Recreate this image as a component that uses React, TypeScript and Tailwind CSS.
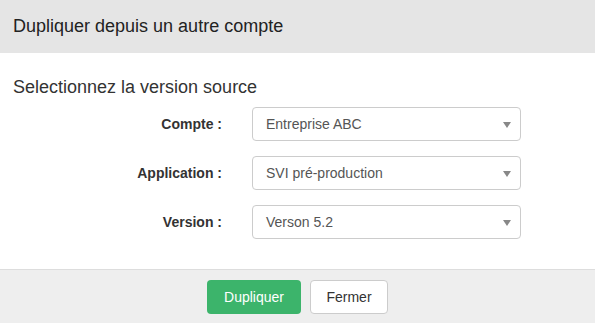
const rows = [
  { label: 'Compte :', value: 'Entreprise ABC' },
  { label: 'Application :', value: 'SVI pré-production' },
  { label: 'Version :', value: 'Verson 5.2' },
]

function FakeSelect({ value }: { value: string }) {
  return (
    <div className="w-[269px] h-[34px] flex items-center justify-between pl-[13px] pr-[9px] border border-[#cccccc] rounded-[4px] bg-white text-[14px] text-[#555555]">
      <span>{value}</span>
      <svg width="8" height="6" viewBox="0 0 8 6" className="mt-[1px]">
        <path d="M0 0 H8 L4 6 Z" fill="#888888" />
      </svg>
    </div>
  )
}

export default function App() {
  return (
    <div className="w-[595px] h-[323px] bg-white flex flex-col font-['Liberation_Sans',Arial,sans-serif] text-[#333333]">
      <div className="h-[53px] shrink-0 flex items-center px-[13px] bg-[#e5e5e5] text-[18px] text-[#222222]">
        Dupliquer depuis un autre compte
      </div>
      <div className="flex-1 pt-[24px] px-[13px]">
        <p className="text-[18px] leading-[21px]">Selectionnez la version source</p>
        <div className="mt-[9px] flex flex-col gap-[15px]">
          {rows.map((r) => (
            <div key={r.label} className="flex items-center">
              <label className="w-[209px] text-right text-[14px] font-bold text-[#333333]">{r.label}</label>
              <div className="ml-[30px]">
                <FakeSelect value={r.value} />
              </div>
            </div>
          ))}
        </div>
      </div>
      <div className="h-[54px] shrink-0 border-t border-[#dddddd] bg-[#eeeeee] flex justify-center pt-[10px] gap-[9px]">
        <button className="w-[94px] h-[34px] rounded-[4px] bg-[#3cb46b] text-white text-[14px]">Dupliquer</button>
        <button className="w-[78px] h-[34px] rounded-[4px] bg-white border border-[#cccccc] text-[#333333] text-[14px]">Fermer</button>
      </div>
    </div>
  )
}
